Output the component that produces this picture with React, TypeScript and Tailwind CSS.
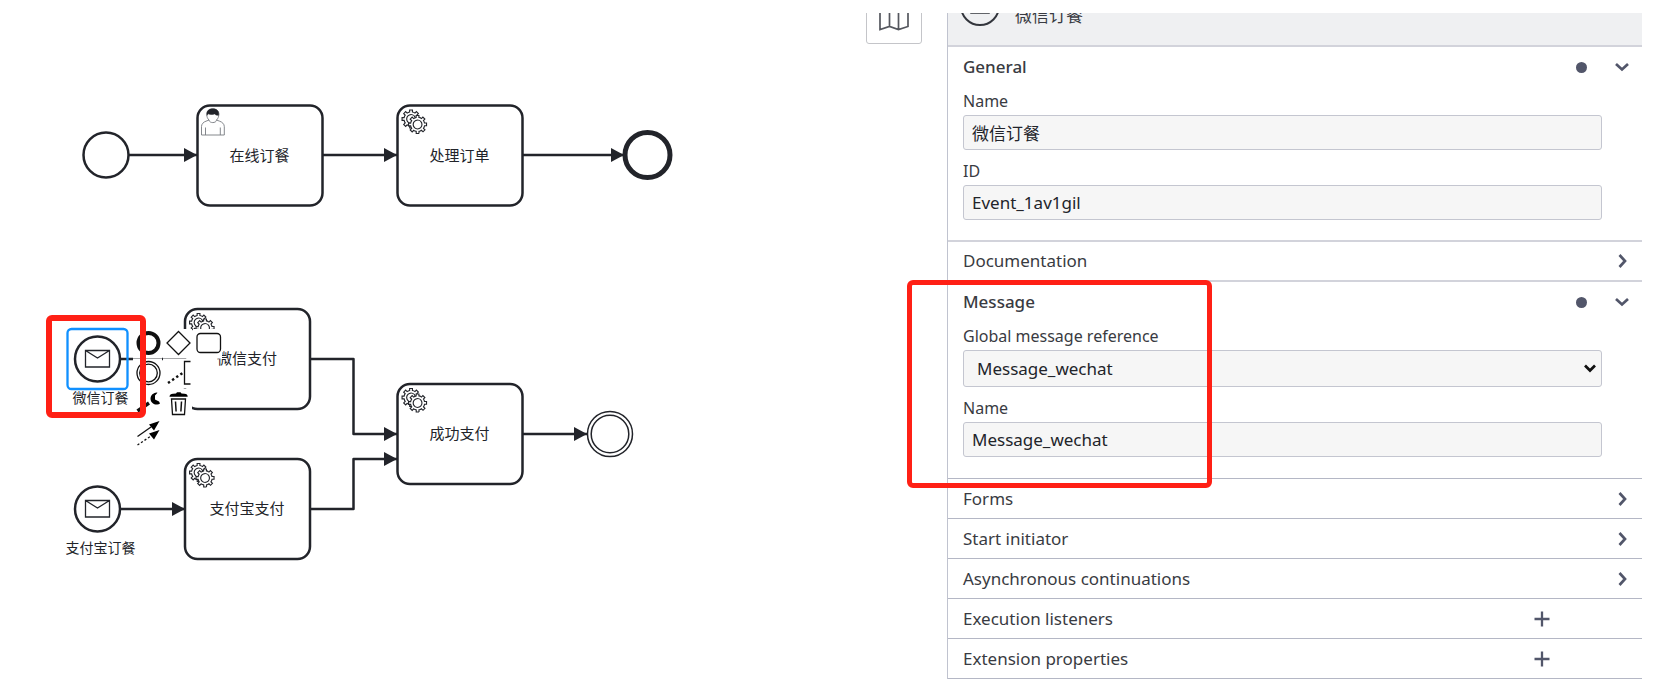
import React, { useState } from "react";

const INK = "#22242a";

const GEAR =
  "v -1.71335 c 0.352326,-0.0705 0.703932,-0.17838 1.047628,-0.32133 0.344416,-0.14465 0.665822,-0.32133 0.966377,-0.52145 l 1.19431,1.18005 1.567487,-1.57688 -1.195028,-1.18014 c 0.403376,-0.61394 0.683079,-1.29908 0.825447,-2.01824 l 1.622133,-0.01 v -2.2196 l -1.636514,0.01 c -0.07333,-0.35153 -0.178319,-0.70024 -0.323564,-1.04372 -0.145244,-0.34406 -0.321407,-0.6644 -0.522735,-0.96217 l 1.131035,-1.13631 -1.583305,-1.56293 -1.129598,1.13589 c -0.614052,-0.40108 -1.302883,-0.68093 -2.022633,-0.82247 l 0.0093,-1.61852 h -2.241173 l 0.0042,1.63124 c -0.353763,0.0736 -0.705369,0.17977 -1.049785,0.32371 -0.344415,0.14437 -0.665102,0.32092 -0.9635006,0.52006 l -1.1698628,-1.15823 -1.5667691,1.5792 1.1684265,1.15669 c -0.4026573,0.61283 -0.68308,1.29797 -0.8247287,2.01713 l -1.6588041,0.003 v 2.22174 l 1.6724648,-0.006 c 0.073327,0.35077 0.1797598,0.70243 0.3242851,1.04472 0.1452428,0.34448 0.3214064,0.6644 0.5227339,0.96066 l -1.1993431,1.19723 1.5840256,1.56011 1.1964668,-1.19348 c 0.6140517,0.40346 1.3028827,0.68232 2.0233517,0.82331 l 7.19e-4,1.69892 h 2.226848 z";
const HUB =
  "m 0.221462,-3.9957 c -1.788948,0.7502 -3.8576,-0.0928 -4.6097055,-1.87438 -0.7521065,-1.78321 0.090598,-3.84627 1.8802645,-4.59604 1.78823,-0.74936 3.856881,0.0929 4.608987,1.87437 0.752106,1.78165 -0.0906,3.84612 -1.879546,4.59605 z";

function Gears() {
  return (
    <g transform="scale(1.25)" fill="#fff" stroke={INK} strokeWidth="0.9">
      <path d={`M12,18 ${GEAR}`} />
      <path d={`M12,18 ${HUB}`} />
      <path d={`M17.2,22.4 ${GEAR}`} />
      <path d={`M17.2,22.4 ${HUB}`} />
    </g>
  );
}

function Person() {
  return (
    <g fill="none" stroke="#777a80" strokeWidth="0.9">
      <path
        fill="#fff"
        d="M4 29.500V21c0-2.500 2-4.500 4.500-5.300l3-1.200c-1.500-1.400-2.200-3.300-2.200-5.300 0-3.500 2.700-5.700 6-5.700s6 2.200 6 5.700c0 2-.8 3.900-2.300 5.300l3.100 1.200c2.500.8 4.700 2.800 4.700 5.300v8.500z"
      />
      <path d="M11.500 14.600c.4 3.300 7.200 3.300 7.500 0M8 29.500v-7.500M22.800 29.500v-7.500" />
      <path
        fill={INK}
        stroke={INK}
        strokeWidth="0.5"
        d="M9.500 9.800C8.600 5 11.800 3.300 15.300 3.300s6.700 1.800 5.800 6.400c-1.800.2-3-.3-4-1.300-2.300.9-5 .8-6.400-.1-.5.5-.8.900-1.200 1.500z"
      />
    </g>
  );
}

function Task({ x, y, label, kind }: { x: number; y: number; label: string; kind: "user" | "service" }) {
  return (
    <g transform={`translate(${x} ${y})`}>
      <rect width="125" height="100" rx="12.500" fill="#fff" stroke={INK} strokeWidth="2.500" />
      {kind === "user" ? <Person /> : <Gears />}
      <text x="62" y="55" textAnchor="middle" fontSize="15" fill={INK}>
        {label}
      </text>
    </g>
  );
}

function MessageStart({ x, y, label }: { x: number; y: number; label: string }) {
  return (
    <g transform={`translate(${x} ${y})`}>
      <circle r="22.500" fill="#fff" stroke={INK} strokeWidth="2.500" />
      <path d="M-12 -8.500h24v16.500h-24zl12 7.500 12-7.500" fill="none" stroke={INK} strokeWidth="1.300" />
      <text x="3" y="44" textAnchor="middle" fontSize="14" fill={INK}>
        {label}
      </text>
    </g>
  );
}

function Flow({ d }: { d: string }) {
  return <path d={d} fill="none" stroke={INK} strokeWidth="2.500" strokeLinejoin="round" markerEnd="url(#arrow)" />;
}

function Diagram() {
  return (
    <svg
      className="block h-[640px] w-[840px] font-['Liberation_Sans','Noto_Sans_CJK_SC',sans-serif]"
      viewBox="0 0 840 640"
      role="img"
      aria-label="BPMN"
    >
      <defs>
        <marker
          id="arrow"
          viewBox="0 0 13 14"
          refX="13"
          refY="7"
          markerWidth="13"
          markerHeight="14"
          markerUnits="userSpaceOnUse"
          orient="auto"
        >
          <path d="M0 0L13 7L0 14z" fill={INK} />
        </marker>
      </defs>
      <circle cx="106" cy="155" r="22.500" fill="#fff" stroke={INK} strokeWidth="2.500" />
      <Task x={197.5} y={105.5} label="在线订餐" kind="user" />
      <Task x={397.5} y={105.5} label="处理订单" kind="service" />
      <circle cx="647.500" cy="155" r="22.500" fill="#fff" stroke={INK} strokeWidth="5" />
      <MessageStart x={97.5} y={359} label="微信订餐" />
      <Task x={185} y={309} label="微信支付" kind="service" />
      <MessageStart x={97.5} y={509} label="支付宝订餐" />
      <Task x={185} y={459} label="支付宝支付" kind="service" />
      <Task x={397.5} y={384} label="成功支付" kind="service" />
      <g fill="#fff" stroke={INK} strokeWidth="1.500">
        <circle cx="610" cy="434" r="22.500" />
        <circle cx="610" cy="434" r="18.800" />
      </g>
      <Flow d="M129 155H197" />
      <Flow d="M323 155H397" />
      <Flow d="M523 155H624" />
      <Flow d="M120 359H185" />
      <Flow d="M310 359H353.500V434H397" />
      <Flow d="M120 509H185" />
      <Flow d="M310 509H353.500V459H397" />
      <Flow d="M523 434H587" />
      <rect x="67.500" y="329" width="60" height="60" rx="4" fill="none" stroke="#1090ff" strokeWidth="2.300" />
    </svg>
  );
}

const padIcons: { name: string; col: string; art: React.ReactNode }[] = [
  { name: "Append end event", col: "col-start-1", art: <circle cx="15.500" cy="14" r="10" strokeWidth="4" /> },
  { name: "Append gateway", col: "col-start-2", art: <path d="M15.500 2.500L27 14 15.500 25.500 4 14z" /> },
  { name: "Append task", col: "col-start-3", art: <rect x="4" y="4.500" width="23.500" height="19" rx="3.500" /> },
  {
    name: "Append intermediate event",
    col: "col-start-1",
    art: (
      <>
        <circle cx="15.500" cy="14" r="11.500" />
        <circle cx="15.500" cy="14" r="8.800" />
      </>
    ),
  },
  {
    name: "Append annotation",
    col: "col-start-2",
    art: (
      <>
        <path d="M27.500 2.500H21.500V25H27.500" />
        <path d="M5 24L21 13" strokeWidth="2.400" strokeDasharray="2.400 2.600" />
      </>
    ),
  },
  {
    name: "Change type",
    col: "col-start-1",
    art: (
      <>
        <path d="M4.500 22L16 14" strokeWidth="3.500" />
        <path d="M27 14.500a6 6 0 1 1-2.500-10.800L22 6.500v4l4 2z" fill="#000" stroke="none" />
      </>
    ),
  },
  {
    name: "Remove",
    col: "col-start-2",
    art: (
      <>
        <path d="M8.500 10l1 15.500h12l1-15.500z" />
        <path d="M6.500 7.800c0-2 1.500-2.800 3.500-3l3-.3 1-1.200h3.500l1 1.200 3 .3c2 .2 3.200 1 3.200 3z" fill="#000" stroke="none" />
        <path d="M12.500 12.500l.6 10M18.500 12.500l-.6 10" strokeWidth="1.500" />
      </>
    ),
  },
  {
    name: "Connect",
    col: "col-start-1",
    art: (
      <>
        <path d="M4.500 17.500L18 8" />
        <path d="M26.500 2l-10.500 3.500 5 6z" fill="#000" stroke="none" />
        <path d="M4.500 26L18 17" strokeDasharray="2.200 2" />
        <path d="M26.500 11l-10.500 3.500 5 6z" fill="#000" stroke="none" />
      </>
    ),
  },
];

function ContextPad() {
  return (
    <div className="absolute top-[329px] left-[133px] grid grid-cols-[29px_29px_29px] gap-px">
      {padIcons.map((icon) => (
        <button
          key={icon.name}
          type="button"
          aria-label={icon.name}
          className={`size-[29px] bg-white shadow-[0_1px_0_rgba(255,255,255,0.6)] ${icon.col}`}
        >
          <svg viewBox="0 0 29 29" className="size-[29px] overflow-visible" fill="none" stroke="#111" strokeWidth="1.300">
            {icon.art}
          </svg>
        </button>
      ))}
    </div>
  );
}

function Chevron({ open }: { open?: boolean }) {
  return (
    <svg viewBox="0 0 20 20" className="size-5" fill="none" stroke="#52566a" strokeWidth="2.700" aria-hidden="true">
      <path d={open ? "M4 7L10 12.500 16 7" : "M7.500 4L13 10 7.500 16"} />
    </svg>
  );
}

function SectionHeader({
  title,
  mode,
  height,
}: {
  title: string;
  mode: "open" | "closed" | "add";
  height: string;
}) {
  return (
    <button
      type="button"
      aria-expanded={mode === "open"}
      className={`flex w-full items-center pr-[10px] pl-[15px] text-left ${height}`}
    >
      <span className={`flex-1 ${mode === "open" ? "font-medium" : ""}`}>{title}</span>
      {mode === "add" && (
        <svg viewBox="0 0 20 20" className="mr-20 size-5" stroke="#52566a" strokeWidth="2.300" aria-hidden="true">
          <path d="M10 2.500V17.500M2.500 10H17.500" />
        </svg>
      )}
      {mode === "open" && <span className="mr-[25px] size-[11px] rounded-full bg-[#52566a]" />}
      {mode !== "add" && <Chevron open={mode === "open"} />}
    </button>
  );
}

const control = "w-full rounded-[3px] border border-[#c4c6d0] bg-[#f6f6f6] text-[#22242a] outline-none";

function TextField({ id, label, initial }: { id: string; label: string; initial: string }) {
  const [value, setValue] = useState(initial);
  return (
    <div>
      <label htmlFor={id} className="block text-base leading-7">
        {label}
      </label>
      <input
        id={id}
        value={value}
        onChange={(e) => setValue(e.target.value)}
        className={`block h-[35px] px-2 ${control}`}
      />
    </div>
  );
}

function PropertiesPanel() {
  return (
    <aside className="border-l border-[#c0c3cf] text-[17px] text-[#393b42]">
      <header className="flex h-[34px] items-end overflow-hidden border-b-2 border-[#d2d3db] bg-[#eff0f2] pl-[12px]">
        <svg viewBox="0 0 40 40" className="mb-[19px] size-10 shrink-0" fill="none" stroke="#33363d" aria-hidden="true">
          <circle cx="20" cy="20" r="19" strokeWidth="2" />
          <path d="M11 13h18v14H11zl9 7 9-7" strokeWidth="1.500" />
        </svg>
        <span className="mb-[17px] ml-[15px] text-[17px] leading-6">微信订餐</span>
      </header>

      <section className="border-b-2 border-[#d2d3db]">
        <SectionHeader title="General" mode="open" height="h-10" />
        <div className="flex flex-col gap-[7px] pr-10 pb-5 pl-[15px]">
          <TextField id="name" label="Name" initial="微信订餐" />
          <TextField id="id" label="ID" initial="Event_1av1gil" />
        </div>
      </section>

      <section className="border-b-2 border-[#d2d3db]">
        <SectionHeader title="Documentation" mode="closed" height="h-[38px]" />
      </section>

      <section className="relative border-b border-[#b4b7c5]">
        <SectionHeader title="Message" mode="open" height="h-10" />
        <div className="flex flex-col gap-[7px] pr-10 pb-[21px] pl-[15px]">
          <div>
            <label htmlFor="message-ref" className="block text-base leading-7">
              Global message reference
            </label>
            <div className="relative">
              <select id="message-ref" className={`block h-[37px] appearance-none pr-8 pl-[13px] ${control}`}>
                <option>Message_wechat</option>
              </select>
              <svg
                viewBox="0 0 12 12"
                className="pointer-events-none absolute top-3 right-[6px] size-3"
                fill="none"
                stroke="#111"
                strokeWidth="2.700"
                aria-hidden="true"
              >
                <path d="M1 3.500L6 8.500 11 3.500" />
              </svg>
            </div>
          </div>
          <TextField id="message-name" label="Name" initial="Message_wechat" />
        </div>
        <div className="pointer-events-none absolute -top-[2px] -left-[41px] h-[208px] w-[305px] rounded-md border-5 border-[#ff2015]" />
      </section>

      {["Forms", "Start initiator", "Asynchronous continuations"].map((title) => (
        <section key={title} className="border-b border-[#b4b7c5]">
          <SectionHeader title={title} mode="closed" height="h-[39px]" />
        </section>
      ))}
      {["Execution listeners", "Extension properties"].map((title) => (
        <section key={title} className="border-b border-[#b4b7c5]">
          <SectionHeader title={title} mode="add" height="h-[39px]" />
        </section>
      ))}
    </aside>
  );
}

export default function App() {
  return (
    <div className="grid grid-cols-[947fr_695fr] bg-white pr-[21px] font-['Noto_Sans','Noto_Sans_CJK_SC',sans-serif]">
      <main className="relative">
        <Diagram />
        <ContextPad />
        <div className="pointer-events-none absolute top-[315px] left-[46px] h-[103px] w-[100px] rounded-md border-[6px] border-[#ff2015]" />
        <div className="absolute top-[13px] right-[25px] h-[31px] overflow-hidden">
          <button
            type="button"
            aria-label="Toggle minimap"
            className="-mt-[26px] flex h-[57px] w-14 items-center justify-center rounded-[3px] border border-[#c4c5c9] bg-white"
          >
            <svg viewBox="0 0 32 32" className="size-8" fill="none" stroke="#55575e" strokeWidth="1.700" aria-hidden="true">
              <path d="M2 6l9.500-3 9 3 9.500-3v23.500l-9.500 3-9-3-9.500 3zM11.500 3v23.500M20.500 6v23.500" />
            </svg>
          </button>
        </div>
      </main>
      <div className="pt-[13px]">
        <PropertiesPanel />
      </div>
    </div>
  );
}
